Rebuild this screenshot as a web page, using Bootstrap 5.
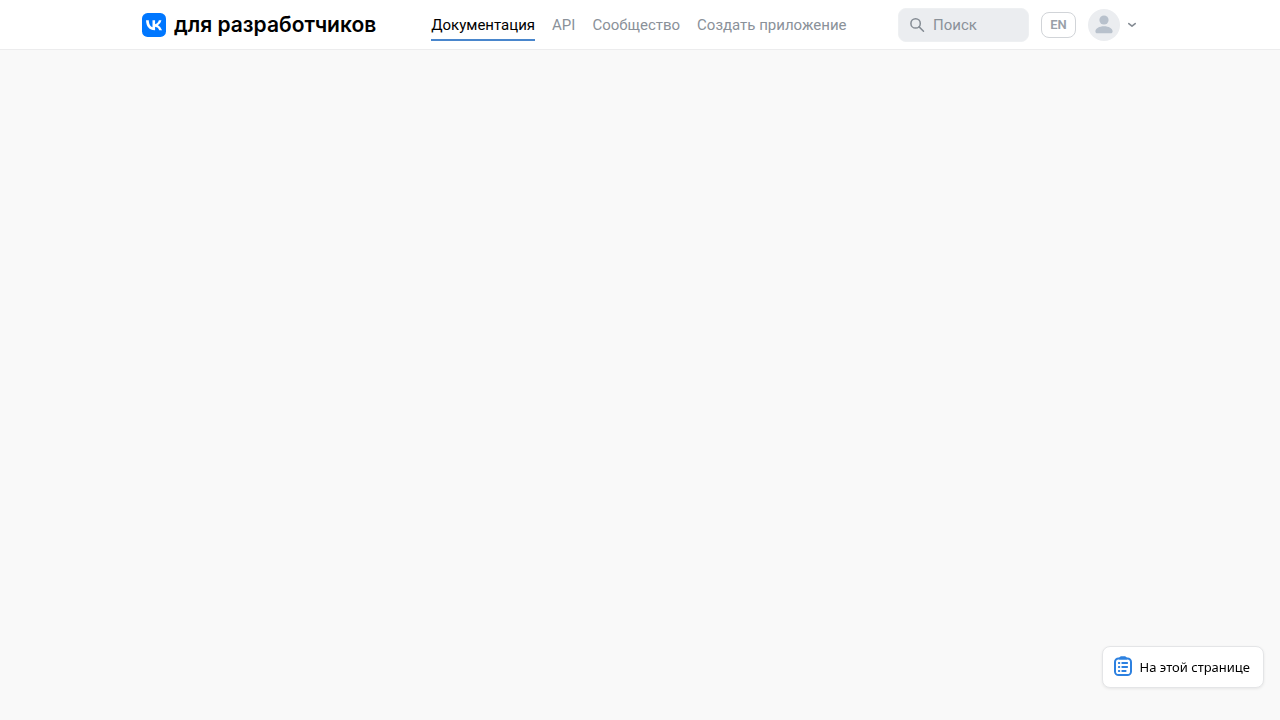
<!DOCTYPE html>
<html lang="ru">
<head>
<meta charset="utf-8">
<meta name="viewport" content="width=device-width, initial-scale=1">
<title>VK для разработчиков</title>
<link href="https://cdn.jsdelivr.net/npm/bootstrap@5.3.0/dist/css/bootstrap.min.css" rel="stylesheet">
<style>
  body { background: #f9f9f9; font-family: Roboto, sans-serif; font-size: 15px; line-height: 20px; color: #000; }
  .site-header { background: #fff; border-bottom: 1px solid #ececed; }
  .header-inner { max-width: 996px; min-height: 49px; }
  .brand-text { font-family: Inter, sans-serif; font-size: 21px; line-height: 22px; font-weight: 600; color: #000; }
  .main-nav { gap: 17px; margin-left: 55px; }
  .main-nav .nav-link { padding: 6px 0 4px; color: #8a9199; border-bottom: 2px solid transparent; }
  .main-nav .nav-link.active { color: #000; border-color: #4986cc; }
  .tools { gap: 12px; padding-right: 2px; }
  .search-box { width: 131px; height: 34px; padding: 0 11px; gap: 8px; background: #ebedf0; border: 1px solid #eef0f2; border-radius: 8px; }
  .search-box input { min-width: 0; font-size: 15px; line-height: 20px; outline: 0; }
  .search-box input::placeholder { color: #8a9199; opacity: 1; }
  .lang-btn { width: 35px; height: 26px; padding: 0; font-size: 13px; line-height: 16px; font-weight: 600; color: #99a0a8; background: #fff; border: 1px solid #d1d4d8; border-radius: 8px; }
  .page-nav-btn { margin-bottom: 32px; padding: 9px 13px 9px 11px; font-family: "Noto Sans", sans-serif; font-size: 13px; line-height: 22px; color: #000; background: #fff; border: 1px solid #e4e5e7; border-radius: 8px; box-shadow: 0 1px 3px rgba(0,0,0,.08); }
</style>
</head>
<body>
<header class="site-header">
  <div class="header-inner container-fluid px-0 d-flex align-items-center">
    <a href="#" class="d-flex align-items-center gap-2 text-decoration-none" aria-label="VK для разработчиков">
      <svg width="24" height="24" viewBox="0 0 24 24" aria-hidden="true">
        <rect width="24" height="24" rx="5.6" fill="#07f"/>
        <path fill="#fff" d="M12.77 17.29c-5.47 0-8.59-3.75-8.72-9.99h2.74c.09 4.58 2.11 6.52 3.71 6.92V7.3h2.58v3.95c1.58-.17 3.24-1.97 3.8-3.95h2.58a7.62 7.62 0 0 1-3.51 4.98 7.9 7.9 0 0 1 4.11 5.01h-2.84a4.94 4.94 0 0 0-4.14-3.57v3.57z"/>
      </svg>
      <span class="brand-text text-nowrap">для разработчиков</span>
    </a>
    <nav class="main-nav nav flex-nowrap text-nowrap" aria-label="Основное меню">
      <a class="nav-link active" aria-current="page" href="#">Документация</a>
      <a class="nav-link" href="#">API</a>
      <a class="nav-link" href="#">Сообщество</a>
      <a class="nav-link" href="#">Создать приложение</a>
    </nav>
    <div class="tools d-flex align-items-center ms-auto">
      <label class="search-box d-flex align-items-center">
        <svg class="flex-shrink-0" width="15" height="16" viewBox="0 0 15 16" fill="none" stroke="#858c94" stroke-width="1.5" stroke-linecap="round" aria-hidden="true"><circle cx="5.6" cy="6.4" r="4.7"/><path d="m9.1 9.9 4.4 4.4"/></svg>
        <input type="search" class="w-100 border-0 bg-transparent p-0" placeholder="Поиск" aria-label="Поиск">
      </label>
      <button type="button" class="lang-btn">EN</button>
      <button type="button" class="btn border-0 p-0 d-flex align-items-center gap-2" aria-label="Меню профиля">
        <svg width="32" height="32" viewBox="0 0 32 32" aria-hidden="true"><circle cx="16" cy="16" r="16" fill="#ebedf0"/><g fill="#b8c1cc"><circle cx="16" cy="11" r="4.6"/><path d="M7.4 22.4c0-3.1 3.9-5.2 8.6-5.2s8.6 2.1 8.6 5.2c0 1.2-.7 1.8-1.8 1.8H9.2c-1.1 0-1.8-.6-1.8-1.8z"/></g></svg>
        <svg width="8" height="8" viewBox="0 0 8 8" fill="none" stroke="#858c94" stroke-width="1.6" stroke-linecap="round" stroke-linejoin="round" aria-hidden="true"><path d="M.8 2.6 4 5.2l3.2-2.6"/></svg>
      </button>
    </div>
  </div>
</header>
<button type="button" class="page-nav-btn position-fixed bottom-0 end-0 d-flex align-items-center gap-2 me-3">
  <svg width="18" height="22" viewBox="0 0 18 22" fill="none" stroke="#2d81e0" aria-hidden="true"><rect x="1" y="2.5" width="16" height="16.5" rx="3.6" stroke-width="2"/><path d="M7 1h4l1.6 1.6H5.4z" fill="#2d81e0" stroke-width="1.6" stroke-linejoin="round"/><path d="M4.8 7h.6m2.8 0h5M4.8 11h.6m2.8 0h5M4.8 15h.6m2.8 0h3.5" stroke-width="1.8" stroke-linecap="round"/></svg>
  На этой странице
</button>
<script src="https://cdn.jsdelivr.net/npm/bootstrap@5.3.0/dist/js/bootstrap.bundle.min.js"></script>
</body>
</html>
